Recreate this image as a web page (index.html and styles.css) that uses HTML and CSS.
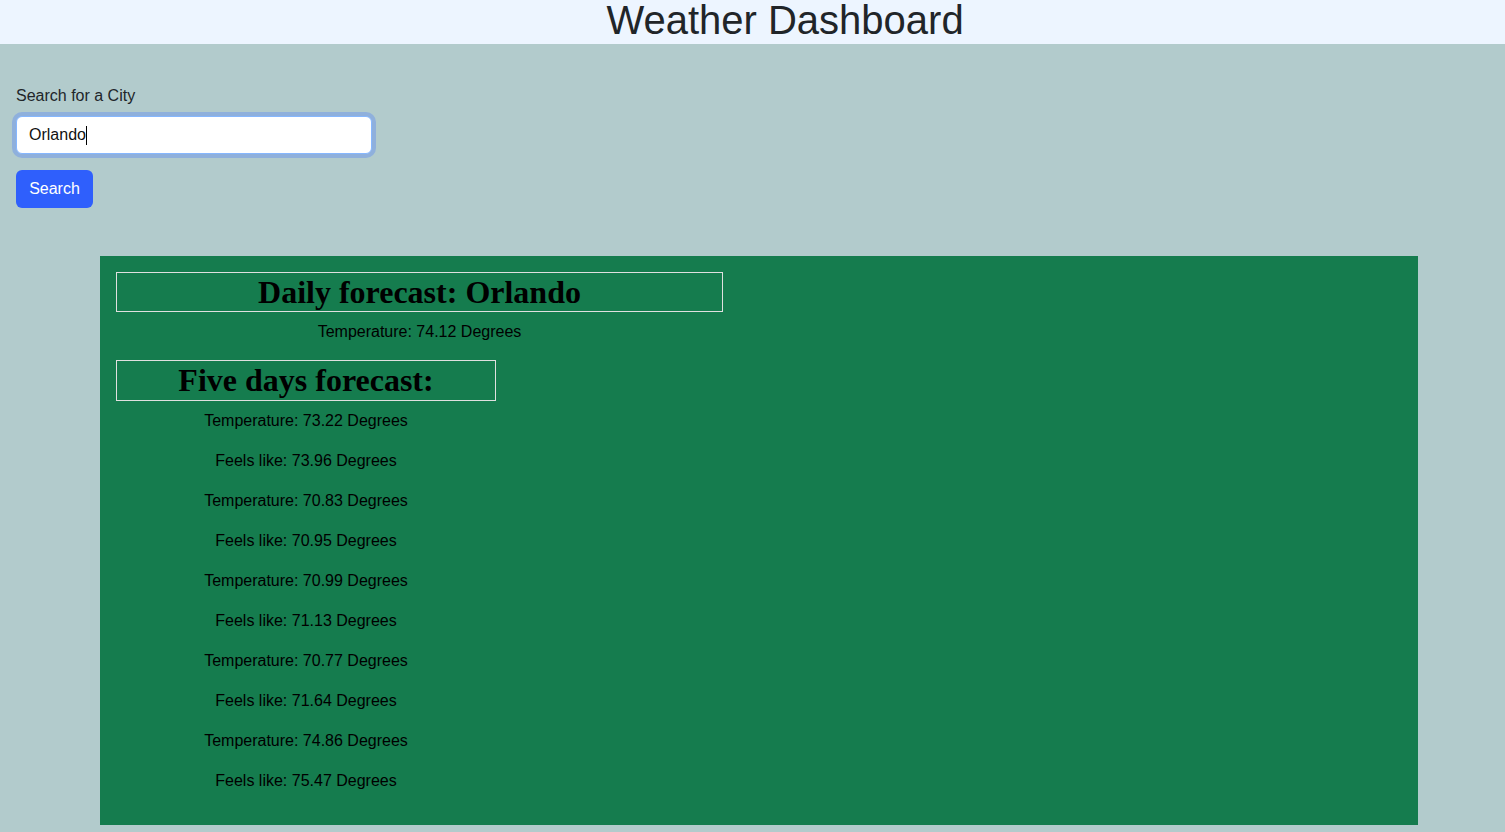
FILE: index.html
```html
<!DOCTYPE html>
<html lang="en">
<head>
<meta charset="utf-8">
<title>Weather Dashboard</title>
<link rel="stylesheet" href="styles.css">
</head>
<body>
<header class="topbar">
  <h1 class="title">Weather Dashboard</h1>
</header>
<main class="page">
  <form class="search">
    <label class="search-label" for="city">Search for a City</label>
    <div class="input-wrap"><input id="city" class="search-input" type="text" value="Orlando"><span class="caret"></span></div>
    <button type="button" class="search-btn">Search</button>
  </form>
  <section class="panel">
    <div class="daily">
      <h2 class="box-title">Daily forecast: Orlando</h2>
      <p class="line">Temperature: 74.12 Degrees</p>
    </div>
    <div class="five">
      <h2 class="box-title">Five days forecast:</h2>
      <p class="line">Temperature: 73.22 Degrees</p>
      <p class="line">Feels like: 73.96 Degrees</p>
      <p class="line">Temperature: 70.83 Degrees</p>
      <p class="line">Feels like: 70.95 Degrees</p>
      <p class="line">Temperature: 70.99 Degrees</p>
      <p class="line">Feels like: 71.13 Degrees</p>
      <p class="line">Temperature: 70.77 Degrees</p>
      <p class="line">Feels like: 71.64 Degrees</p>
      <p class="line">Temperature: 74.86 Degrees</p>
      <p class="line">Feels like: 75.47 Degrees</p>
    </div>
  </section>
</main>
</body>
</html>
```
FILE: styles.css
```css
* { box-sizing: border-box; }
html, body { margin: 0; padding: 0; }
body {
  background: #b2cbcc;
  font-family: "Liberation Sans", Arial, sans-serif;
  font-size: 16px;
  line-height: 24px;
  color: #212529;
  height: 832px;
  overflow: hidden;
}
.topbar {
  background: #edf5ff;
  height: 44px;
  padding-left: 65px;
  text-align: center;
}
.title {
  margin: 0;
  font-weight: 400;
  font-size: 40px;
  line-height: 40px;
  color: #212529;
}
.page {
  padding: 40px 16px 0 16px;
}
.search {
  display: flex;
  flex-direction: column;
  align-items: flex-start;
}
.search-label {
  margin-bottom: 8px;
}
.input-wrap {
  position: relative;
  width: 356px;
  height: 38px;
}
.search-input {
  width: 356px;
  height: 38px;
  padding: 6px 12px;
  font-family: "Liberation Sans", Arial, sans-serif;
  font-size: 16px;
  color: #111;
  background: #fff;
  border: 1px solid #86b7fe;
  border-radius: 6px;
  box-shadow: 0 0 0 4px #8fb0dc;
  outline: none;
}
.caret {
  position: absolute;
  left: 70px;
  top: 10px;
  width: 1px;
  height: 19px;
  background: #000;
}
.search-btn {
  margin-top: 16px;
  height: 38px;
  width: 77px;
  padding: 0;
  background: #2f5ffc;
  color: #fff;
  border: none;
  border-radius: 6px;
  font-family: "Liberation Sans", Arial, sans-serif;
  font-size: 16px;
}
.panel {
  margin: 48px 71px 0 84px;
  background: #157c4e;
  padding: 16px;
  color: #000;
}
.daily { width: 607px; text-align: center; }
.five { width: 380px; text-align: center; }
.box-title {
  margin: 0 0 8px 0;
  border: 1px solid #e0e0e0;
  font-family: "Liberation Serif", "Times New Roman", serif;
  font-weight: 700;
  font-size: 32px;
  line-height: 38.4px;
  color: #000;
}
.line {
  margin: 0 0 16px 0;
}
```
